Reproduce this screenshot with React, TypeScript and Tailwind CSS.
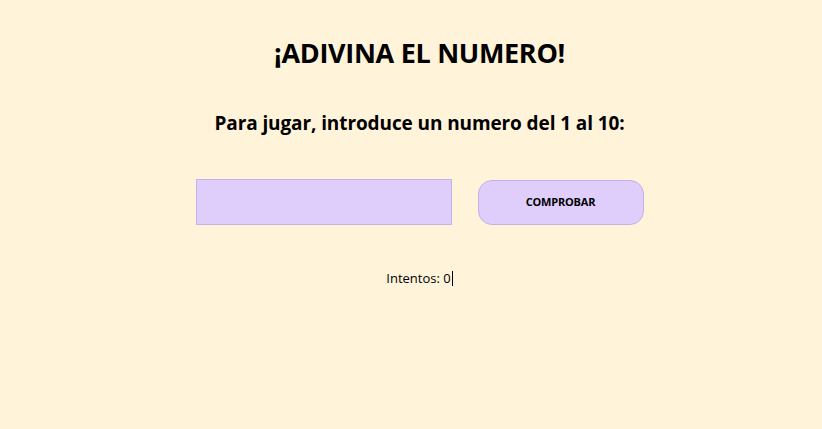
import React, { useState } from 'react';

export default function App() {
  const [value, setValue] = useState('');
  const [intentos] = useState(0);

  return (
    <div
      className="min-h-[429px] w-full bg-[#fff3da] text-black"
      style={{ fontFamily: '"Open Sans", "Noto Sans", sans-serif' }}
    >
      <div className="flex flex-col items-center pl-[17px] pt-[35px]">
        <h1 className="text-[27px] font-bold leading-[36px] tracking-[-0.3px]">¡ADIVINA EL NUMERO!</h1>
        <h2 className="mt-[39px] text-[19px] font-bold leading-[26px] tracking-[-0.1px]">
          Para jugar, introduce un numero del 1 al 10:
        </h2>
        <div className="mt-[43px] flex items-center gap-[26px]">
          <input
            type="text"
            value={value}
            onChange={(e) => setValue(e.target.value)}
            className="h-[46px] w-[256px] border border-[#c4b1e6] bg-[#dfcdfc] px-2 outline-none"
          />
          <button className="h-[45px] w-[166px] rounded-[14px] border border-[#c4b1e6] bg-[#dfcdfc] text-[11px] font-bold tracking-[-0.2px]">
            COMPROBAR
          </button>
        </div>
        <div className="mt-[44px] flex items-center text-[13px] leading-[18px]">
          <span>Intentos: {intentos}</span>
          <span className="ml-px h-[15px] w-px bg-black" />
        </div>
      </div>
    </div>
  );
}
